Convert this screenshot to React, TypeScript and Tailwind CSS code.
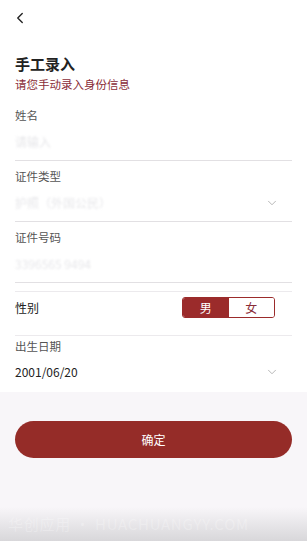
import { ChevronLeft, ChevronDown } from "lucide-react";

const FONT = { fontFamily: '"Noto Sans CJK SC", "Noto Sans", sans-serif' };

function Field({
  label,
  value,
  faint,
  chevron,
  last,
}: {
  label: string;
  value: string;
  faint?: boolean;
  chevron?: boolean;
  last?: boolean;
}) {
  return (
    <div className={last ? "pt-[1px]" : "pt-[6px] border-b border-[#e2e0e3]"}>
      <div className="text-[11.5px] leading-[18px] text-[#555]">{label}</div>
      <div className={`flex items-center justify-between ${last ? "h-[34px]" : "h-[36px]"}`}>
        <span
          className={`text-[12px] ${faint ? "text-[#e7e7ea] blur-[1px]" : "text-[#222]"}`}
        >
          {value}
        </span>
        {chevron && <ChevronDown className="w-[14px] h-[14px] text-[#9a9a9a] mr-[13px]" strokeWidth={1.2} />}
      </div>
    </div>
  );
}

export default function App() {
  return (
    <div className="w-[307px] h-[541px] bg-[#f8f6f9] flex flex-col overflow-hidden" style={FONT}>
      <div className="bg-white px-[15px] pb-[3px]">
        <div className="h-[36px] flex items-center">
          <ChevronLeft className="w-[18px] h-[18px] -ml-[4px] text-[#222]" strokeWidth={1.8} />
        </div>
        <div className="pt-[17px]">
          <h1 className="text-[15px] leading-[22px] font-bold text-[#222]">手工录入</h1>
          <p className="text-[11.5px] leading-[18px] text-[#8a2c38]">请您手动录入身份信息</p>
        </div>
        <div className="mt-[7px]">
          <Field label="姓名" value="请输入" faint />
          <Field label="证件类型" value="护照（外国公民）" faint chevron />
          <Field label="证件号码" value="3396565 9494" faint />
          <div className="mt-[8px] border-t border-[#eceaed] border-b h-[45px] pt-[5px] flex items-start justify-between">
            <span className="text-[12px] leading-[21px] text-[#222]">性别</span>
            <div className="flex w-[93px] h-[21px] border border-[#9b2b2b] rounded-[3px] overflow-hidden mr-[17px]">
              <div className="flex-1 bg-[#9b2b2b] text-white text-[12px] flex items-center justify-center">男</div>
              <div className="flex-1 bg-white text-[#8a2c38] text-[12px] flex items-center justify-center">女</div>
            </div>
          </div>
          <Field label="出生日期" value="2001/06/20" chevron last />
        </div>
      </div>
      <div className="px-[15px] pt-[29px]">
        <button className="w-full h-[37px] rounded-full bg-[#952c28] text-white text-[12px]">确定</button>
      </div>
      <div className="flex-1" />
      <div className="h-[34px] bg-gradient-to-b from-[#f8f6f9] to-[#d8d7da] flex items-center px-[8px] text-[15px] text-white/25 tracking-wider whitespace-nowrap">
        华创应用 · HUACHUANGYY.COM
      </div>
    </div>
  );
}
